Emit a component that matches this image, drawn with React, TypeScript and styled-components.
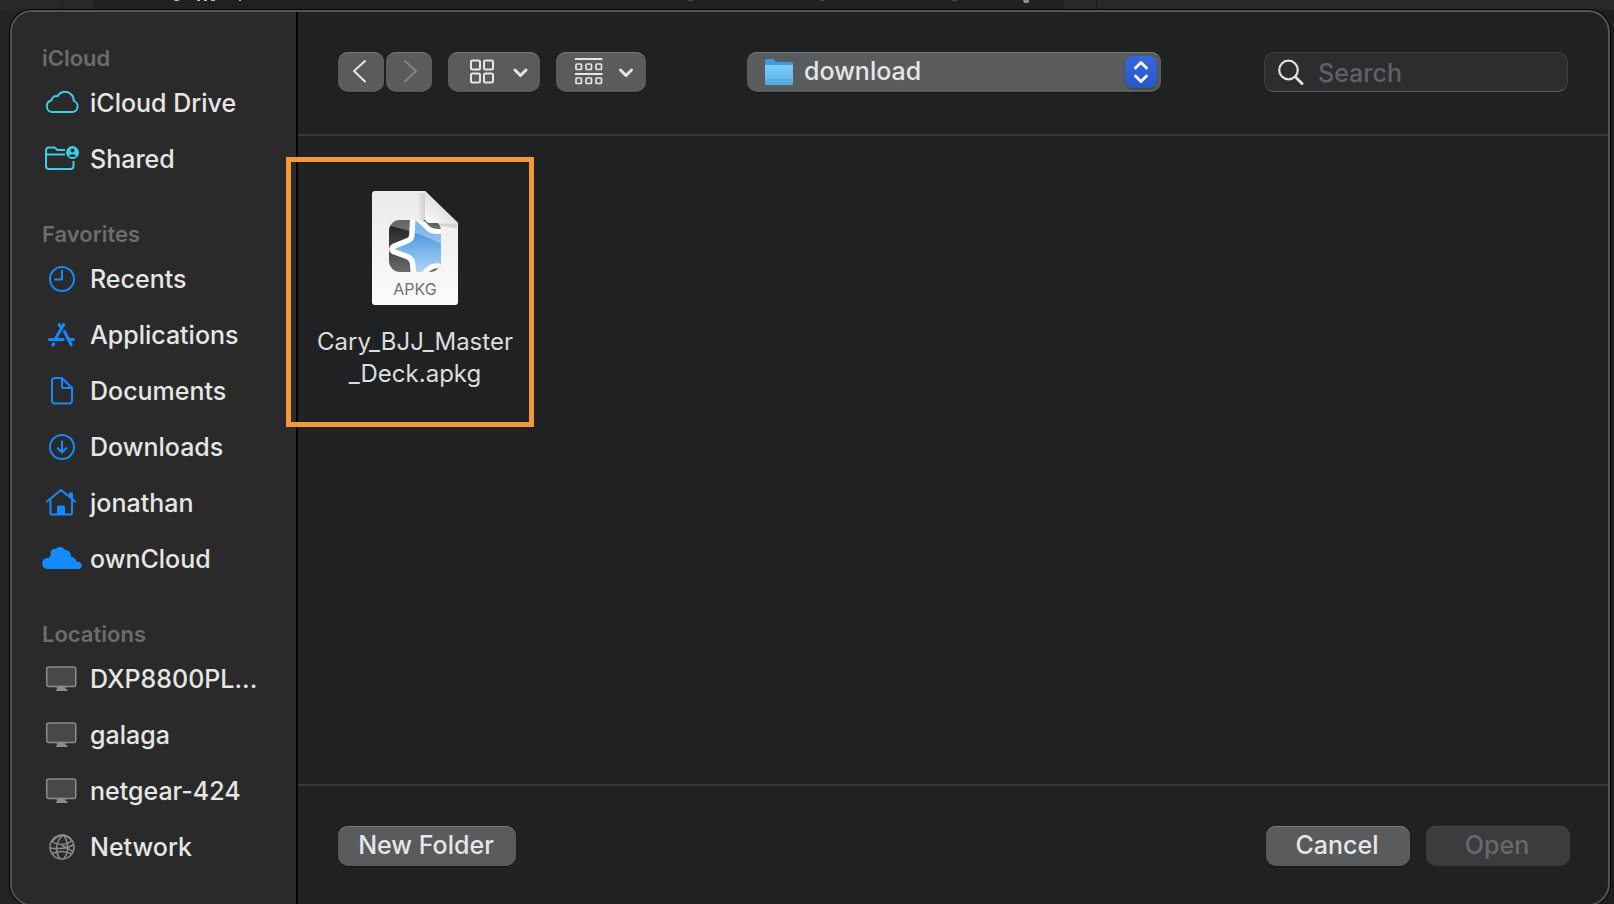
import React from "react";
import styled, { createGlobalStyle } from "styled-components";

const GlobalStyle = createGlobalStyle`
  * { box-sizing: border-box; }
  html, body, #root { height: 100%; }
  body {
    margin: 0;
    overflow: hidden;
    background: #1e1e1e;
    color: #e6e6e6;
    font-family: Inter, "Liberation Sans", sans-serif;
    font-size: 25px;
  }
  button, input, select { font: inherit; color: inherit; margin: 0; }
  svg { display: block; flex: none; }
  ul { list-style: none; margin: 0; padding: 0; }
`;

const Desktop = styled.div`
  display: flex;
  flex-direction: column;
  min-height: 100vh;
  height: 100%;
  background: linear-gradient(90deg, #242424 0%, #1e1e1e 10%, #1e1e1e 100%);
`;

const BackdropStrip = styled.div`
  flex: none;
  height: 10px;
  background: #282828;
  overflow: hidden;
`;

const Panel = styled.main`
  flex: 1;
  display: flex;
  margin: 0 4px -2px 10px;
  border: 2px solid #555556;
  border-radius: 22px;
  box-shadow: 0 0 0 1px #000;
  background: #202123;
  min-height: 0;
`;

const Sidebar = styled.nav`
  flex: none;
  width: 286px;
  padding: 29px 30px 0 30px;
  display: flex;
  flex-direction: column;
  gap: 30px;
  background: #2a2a2a;
  border-right: 2px solid #000;
  border-radius: 20px 0 0 20px;
`;

const GroupTitle = styled.h2`
  margin: 0;
  height: 34px;
  line-height: 34px;
  font-size: 22px;
  font-weight: 600;
  color: #6c6c6c;
`;

const Place = styled.a`
  display: flex;
  align-items: center;
  gap: 8px;
  height: 56px;
  color: #e6e6e6;
  font-weight: 500;
  text-decoration: none;
  white-space: nowrap;
`;

const Content = styled.section`
  flex: 1;
  min-width: 0;
  display: flex;
  flex-direction: column;
`;

const Toolbar = styled.header`
  flex: none;
  height: 124px;
  display: flex;
  align-items: center;
  justify-content: space-between;
  padding: 0 40px 2px 40px;
  border-bottom: 2px solid #353638;
`;

const ToolGroup = styled.div`
  display: flex;
  gap: 16px;
`;

const NavPair = styled.div`
  display: flex;
  gap: 2px;
`;

const Button = styled.button<{ $width: number }>`
  width: ${(p) => p.$width}px;
  height: 40px;
  padding: 0 2px 2px 0;
  display: flex;
  align-items: center;
  justify-content: center;
  border: 0;
  border-radius: 10px;
  background: #5a5b5d;
  box-shadow: inset 0 1px 0 #78797b, 0 1px 1px #141415;
  color: #e6e6e6;
  font-weight: 500;
  line-height: 38px;
  white-space: nowrap;

  &:disabled {
    background: #3b3c3e;
    box-shadow: inset 0 1px 0 #48494b;
    color: #68696b;
  }
`;

const ToolButton = styled(Button)`
  padding: 0;

  &:disabled {
    background: #5a5b5d;
    box-shadow: inset 0 1px 0 #78797b, 0 1px 1px #141415;
  }
`;

const FolderPicker = styled.label`
  display: flex;
  align-items: center;
  gap: 10px;
  width: 414px;
  height: 40px;
  margin-right: 2px;
  padding: 0 4px 0 17px;
  border-radius: 10px;
  background: #5a5b5d;
  box-shadow: inset 0 1px 0 #78797b, 0 1px 1px #141415;
`;

const FolderSelect = styled.select`
  flex: 1;
  min-width: 0;
  height: 38px;
  padding: 0 0 2px;
  border: 0;
  background: transparent;
  font-weight: 500;
  appearance: none;
  outline: none;
`;

const Stepper = styled.span`
  flex: none;
  display: flex;
  align-items: center;
  justify-content: center;
  width: 32px;
  height: 32px;
  border-radius: 8px;
  background: linear-gradient(#3468de, #2858c6);
  box-shadow: 0 1px 2px #3c3d40;
`;

const SearchBox = styled.label`
  display: flex;
  align-items: center;
  gap: 13px;
  width: 304px;
  height: 40px;
  padding: 0 12px;
  border: 1px solid #3d3e40;
  border-bottom-color: #5a5b5d;
  border-radius: 10px;
  background: #2c2d2f;
`;

const SearchInput = styled.input`
  flex: 1;
  min-width: 0;
  height: 36px;
  padding: 2px 0 0;
  border: 0;
  outline: none;
  background: transparent;
  font-weight: 500;

  &::placeholder { color: #606164; opacity: 1; }
`;

const Files = styled.div`
  flex: 1;
  min-height: 0;
  padding: 21px 0 0;
`;

/* The highlight frame reaches over the sidebar's edge. */
const FileTile = styled.figure`
  position: relative;
  width: 248px;
  height: 270px;
  margin: 0 0 0 -12px;
  padding: 27px 0 0 10px;
  display: flex;
  flex-direction: column;
  align-items: center;
  gap: 19px;
  border: 5px solid #f29a38;
`;

const FileName = styled.figcaption`
  font-size: 24px;
  line-height: 32px;
  text-align: center;
  color: #dddddd;
`;

const Footer = styled.footer`
  flex: none;
  height: 120px;
  display: flex;
  align-items: flex-start;
  gap: 16px;
  padding: 40px 38px 0 40px;
  border-top: 2px solid #353638;
`;

const Spacer = styled.span`
  flex: 1;
`;

const BLUE = "#148aff";
const CYAN = "#3acfe6";
const GRAY = "#8b8b8b";

const CloudIcon = () => (
  <svg width="40" height="32" viewBox="0 0 40 32" fill="none" stroke={CYAN} strokeWidth="2" strokeLinejoin="round">
    <path d="M10 25h19.500a5.700 5.700 0 0 0 2.200-11.100c0.400-4.900-3.800-9.100-8.600-9.100-3.300 0-6 1.700-7.500 4.500-2.800-0.900-5.800 0.800-6 3.900-3 0.700-4.700 3-4.700 5.800 0 3.400 2.200 6 5.100 6z" />
  </svg>
);

const SharedIcon = () => (
  <svg width="40" height="32" viewBox="0 0 40 32" fill="none" stroke={CYAN} strokeWidth="2">
    <path d="M23 7h-7.500l-3-2.500H7a3 3 0 0 0-3 3V23a3 3 0 0 0 3 3h21.500a3 3 0 0 0 3-3v-5M4 11.500h19" />
    <circle cx="30.500" cy="9.500" r="6.500" fill={CYAN} stroke="none" />
    <circle cx="30.500" cy="7.500" r="2" fill="#2a2a2a" stroke="none" />
    <path d="M26.700 13a4.100 3 0 0 1 7.600 0q-3.800 2-7.600 0z" fill="#2a2a2a" stroke="none" />
  </svg>
);

const ClockIcon = () => (
  <svg width="40" height="32" viewBox="0 0 40 32" fill="none" stroke={BLUE} strokeWidth="2" strokeLinecap="round" strokeLinejoin="round">
    <circle cx="20" cy="16" r="12" />
    <path d="M20 7.500v9h-7" />
  </svg>
);

const AppsIcon = () => (
  <svg width="40" height="32" viewBox="0 0 40 32" fill="none" stroke={BLUE} strokeWidth="3" strokeLinecap="round">
    <path d="M21.700 5.500 13.900 19M17.200 5.500l2.300 4M7.400 20.500h13.800M27.500 20.500h4M22.500 12.500l6.700 13.200M11.700 24.700l-.8 1.400" />
  </svg>
);

const DocumentIcon = () => (
  <svg width="40" height="32" viewBox="0 0 40 32" fill="none" stroke={BLUE} strokeWidth="2" strokeLinejoin="round">
    <path d="M20 3H12.500A2.500 2.500 0 0 0 10 5.500v20.500a2.500 2.500 0 0 0 2.500 2.500h15a2.500 2.500 0 0 0 2.500-2.500V13zM20 3v8a2 2 0 0 0 2 2h8" />
  </svg>
);

const DownloadIcon = () => (
  <svg width="40" height="32" viewBox="0 0 40 32" fill="none" stroke={BLUE} strokeWidth="2" strokeLinecap="round" strokeLinejoin="round">
    <circle cx="20" cy="16" r="12" />
    <path d="M20 10.500v10.500M15.700 17.200l4.300 4.300 4.300-4.300" />
  </svg>
);

const HomeIcon = () => (
  <svg width="40" height="32" viewBox="0 0 40 32" fill="none" stroke={BLUE} strokeWidth="2" strokeLinecap="round" strokeLinejoin="round">
    <path d="M5 14.500 19 3l14.200 11.500M8.500 12v14a1.500 1.500 0 0 0 1.500 1.500h18.500a1.500 1.500 0 0 0 1.500-1.500V6.500h-2v3.500" />
    <path d="M15 27.500V20a1.500 1.500 0 0 1 1.500-1.500h5A1.500 1.500 0 0 1 23 20v7.500z" fill={BLUE} stroke="none" />
  </svg>
);

const OwnCloudIcon = () => (
  <svg width="40" height="32" viewBox="0 0 40 32" fill={BLUE}>
    <path d="M5 26a5.500 5.500 0 0 1 0-10.900q1-.2 2 .1a6 6 0 0 1 2-3.500c-1.800-4 2-6.800 4.800-5.700C16 3.300 21 3.300 23 7c4-.3 6.500 3.200 6 7 3 0 5.300 2 5.600 4.800 6-.8 7.200 6.800 1.900 7.200z" />
  </svg>
);

const DisplayIcon = () => (
  <svg width="40" height="32" viewBox="0 0 40 32">
    <rect x="4.750" y="4" width="29" height="19.500" rx="2" fill="#484848" stroke={GRAY} strokeWidth="1.500" />
    <path d="M15 24h8.500v2.200h1.200q1 0 1 1.800H14q0-1.800 1-1.800z" fill={GRAY} />
  </svg>
);

const GlobeIcon = () => (
  <svg width="40" height="32" viewBox="0 0 40 32" fill="none" stroke={GRAY} strokeWidth="1.500">
    <circle cx="20" cy="16" r="12" />
    <path d="M21 4c-8 7-8 17-3 24M21 4c6 6 6 17 1 23.500M21 4c-5 1-9 4-11 7M21 4c4 1 7 3 9 6" />
    <path d="M9.500 10.500c6 4 15 4 20.500-1M8 17c7 1 17 1 23.800-3.500M10 22.500c7-3 13-3 20.500.5M20 14.500c3 1 7 4 11 6" />
  </svg>
);

const ArrowIcon = ({ flip, color }: { flip?: boolean; color: string }) => (
  <svg width="46" height="40" viewBox="0 0 46 40" fill="none" stroke={color} strokeWidth="2" strokeLinecap="round" strokeLinejoin="round">
    <path d={flip ? "M19 9l11 10-11 10.500" : "M27 9 16 19l11 10.500"} />
  </svg>
);

const GridIcon = () => (
  <svg width="92" height="40" viewBox="0 0 92 40" fill="none" stroke="#e6e6e6" strokeWidth="2">
    {[9, 22].map((y) => [23, 36].map((x) => <rect key={`${x}-${y}`} x={x} y={y - 0.500} width="9" height="9" rx="1.500" />))}
    <path d="M67 18l5.500 5.500L78 18" strokeWidth="3" strokeLinecap="round" strokeLinejoin="round" />
  </svg>
);

const GroupIcon = () => (
  <svg width="90" height="40" viewBox="0 0 90 40" fill="none" stroke="#e6e6e6" strokeWidth="2">
    <path d="M19 7h27.500M19 22h27.500" />
    {[12, 26].map((y) => [20, 30, 40].map((x) => <rect key={`${x}-${y}`} x={x} y={y} width="5.500" height="5.500" rx="1" strokeWidth="1.700" />))}
    <path d="M64.500 18l5.500 5.500 5.500-5.500" strokeWidth="3" strokeLinecap="round" strokeLinejoin="round" />
  </svg>
);

const FolderIcon = () => (
  <svg width="30" height="28" viewBox="0 0 30 28">
    <defs>
      <linearGradient id="folder" x1="0" y1="0" x2="0" y2="1">
        <stop offset="0" stopColor="#7ccdf8" />
        <stop offset="1" stopColor="#58b2e6" />
      </linearGradient>
    </defs>
    <path d="M1 2.500Q1 1 2.500 1h6q1 0 2 1l1.500 1.500q.5.500 1.500.5h14Q29 4 29 5.500V12H1z" fill="#3f9cda" />
    <path d="M1 7h28v18.500q0 1.500-1.500 1.500h-25Q1 27 1 25.500z" fill="url(#folder)" />
    <path d="M1 22h28M1 25h28" stroke="#4ba0d3" strokeWidth="1" />
  </svg>
);

const StepperIcon = () => (
  <svg width="32" height="32" viewBox="0 0 32 32" fill="none" stroke="#eef2fb" strokeWidth="3" strokeLinecap="round" strokeLinejoin="round">
    <path d="M10.500 12 16 6.500l5.500 5.500M10.500 20l5.500 5.500 5.500-5.500" />
  </svg>
);

const SearchIcon = () => (
  <svg width="28" height="28" viewBox="0 0 28 28" fill="none" stroke="#e0e0e0" strokeLinecap="round">
    <circle cx="11.500" cy="12" r="9.300" strokeWidth="2.200" />
    <path d="m18.500 19 6.500 6.500" strokeWidth="3" />
  </svg>
);

const PackageIcon = () => (
  <svg width="90" height="118" viewBox="0 0 90 118" role="img" aria-label="APKG file">
    <defs>
      <linearGradient id="paper" x1="0" y1="0" x2="0" y2="1">
        <stop offset="0" stopColor="#ebebeb" />
        <stop offset="1" stopColor="#fbfbfb" />
      </linearGradient>
      <linearGradient id="fold" x1="0" y1="1" x2="1" y2="0">
        <stop offset="0" stopColor="#fdfdfd" />
        <stop offset="0.500" stopColor="#e2e2e2" />
      </linearGradient>
      <linearGradient id="shade" x1="0" y1="0" x2="1" y2="0">
        <stop offset="0" stopColor="#000" stopOpacity="0" />
        <stop offset="1" stopColor="#000" stopOpacity="0.250" />
      </linearGradient>
      <linearGradient id="star" x1="0" y1="0" x2="0" y2="1">
        <stop offset="0.250" stopColor="#4694e0" />
        <stop offset="1" stopColor="#c3e2fb" />
      </linearGradient>
      <linearGradient id="night" x1="0" y1="0" x2="0" y2="1">
        <stop offset="0" stopColor="#1c1c1c" />
        <stop offset="1" stopColor="#6a6a6a" />
      </linearGradient>
      <clipPath id="tile"><rect x="19" y="31" width="52" height="52" rx="11" /></clipPath>
    </defs>
    <path d="M2 5q0-3 3-3h50l33 32v79q0 3-3 3H5q-3 0-3-3z" fill="url(#paper)" />
    <g clipPath="url(#tile)">
      <rect x="19" y="31" width="52" height="52" fill="url(#night)" />
      <path d="M44 24Q42 30 41.500 46.500 40 51 23 58.500q-3 2 0 4Q40 68 41.500 73q1 6 2 18 3 0 8-1 4-10 16-13l10-1-5-12 1-20-6-4q-10-1-15-10z" fill="url(#star)" />
      <path d="M17 30h58v27Q55 45 17 36z" fill="#fff" opacity="0.320" />
      <path d="M43.500 22q-1 9-1.500 23 0 5-4 6.500L23.500 57.500q-3.500 2.500 0 5L38 68q4 2 4.500 6l1.500 16" fill="none" stroke="#fff" strokeWidth="5.500" />
      <path d="M47 29q6 5 10 9.500 5 5.500 16 3.500M54 85q4-6 9-7.500 5-1.500 10 .5" fill="none" stroke="#fff" strokeWidth="5" />
    </g>
    <path d="M47 4h8v29H50z" fill="url(#shade)" opacity="0.500" />
    <path d="M55 2v27q0 5 5 5h28z" fill="url(#fold)" />
    <path d="M57 34.500h30v5z" fill="#000" opacity="0.120" />
    <text x="45" y="106" textAnchor="middle" fontFamily="Inter, sans-serif" fontSize="16" fill="#707070">APKG</text>
  </svg>
);

const groups = [
  { title: "iCloud", places: [["iCloud Drive", CloudIcon], ["Shared", SharedIcon]] },
  {
    title: "Favorites",
    places: [
      ["Recents", ClockIcon],
      ["Applications", AppsIcon],
      ["Documents", DocumentIcon],
      ["Downloads", DownloadIcon],
      ["jonathan", HomeIcon],
      ["ownCloud", OwnCloudIcon],
    ],
  },
  {
    title: "Locations",
    places: [
      ["DXP8800PL...", DisplayIcon],
      ["galaga", DisplayIcon],
      ["netgear-424", DisplayIcon],
      ["Network", GlobeIcon],
    ],
  },
] as { title: string; places: [string, React.FC][] }[];

export default function App() {
  return (
    <Desktop>
      <GlobalStyle />
      <BackdropStrip>
        <svg width="1614" height="10" viewBox="0 0 1614 10" aria-hidden="true">
          <path d="M62 0h1v10h-1zM1096 0h1v10h-1z" fill="#1b1b1b" />
          <path d="M93 0h972q0 6-4 10H97q-4-4-4-10z" fill="#202020" />
          <path d="M174 0h6l-2 1h-3zM197 0h3v1h-3zM204 0h3v1h-3zM211 0h4v1h-4zM239 0h2v1h-2z" fill="#bbb" />
          <path d="M688 0h5l-1 1h-3zM820 0h5l-1 1h-3zM952 0h5l-1 1h-3z" fill="#505050" />
          <path d="M1023 0h6v2l-1 1h-4z" fill="#8c8c8c" />
        </svg>
      </BackdropStrip>
      <Panel>
        <Sidebar aria-label="Places">
          {groups.map((group) => (
            <section key={group.title}>
              <GroupTitle>{group.title}</GroupTitle>
              <ul>
                {group.places.map(([name, Icon]) => (
                  <li key={name}>
                    <Place href="#"><Icon />{name}</Place>
                  </li>
                ))}
              </ul>
            </section>
          ))}
        </Sidebar>
        <Content>
          <Toolbar>
            <ToolGroup>
              <NavPair>
                <ToolButton $width={46} aria-label="Back"><ArrowIcon color="#e6e6e6" /></ToolButton>
                <ToolButton $width={46} aria-label="Forward" disabled><ArrowIcon flip color="#838486" /></ToolButton>
              </NavPair>
              <ToolButton $width={92} aria-label="Icon view"><GridIcon /></ToolButton>
              <ToolButton $width={90} aria-label="Group items"><GroupIcon /></ToolButton>
            </ToolGroup>
            <FolderPicker>
              <FolderIcon />
              <FolderSelect aria-label="Folder"><option>download</option></FolderSelect>
              <Stepper><StepperIcon /></Stepper>
            </FolderPicker>
            <SearchBox>
              <SearchIcon />
              <SearchInput type="text" placeholder="Search" aria-label="Search" />
            </SearchBox>
          </Toolbar>
          <Files>
            <FileTile>
              <PackageIcon />
              <FileName>Cary_BJJ_Master<br />_Deck.apkg</FileName>
            </FileTile>
          </Files>
          <Footer>
            <Button $width={178}>New Folder</Button>
            <Spacer />
            <Button $width={144}>Cancel</Button>
            <Button $width={144} disabled>Open</Button>
          </Footer>
        </Content>
      </Panel>
    </Desktop>
  );
}
